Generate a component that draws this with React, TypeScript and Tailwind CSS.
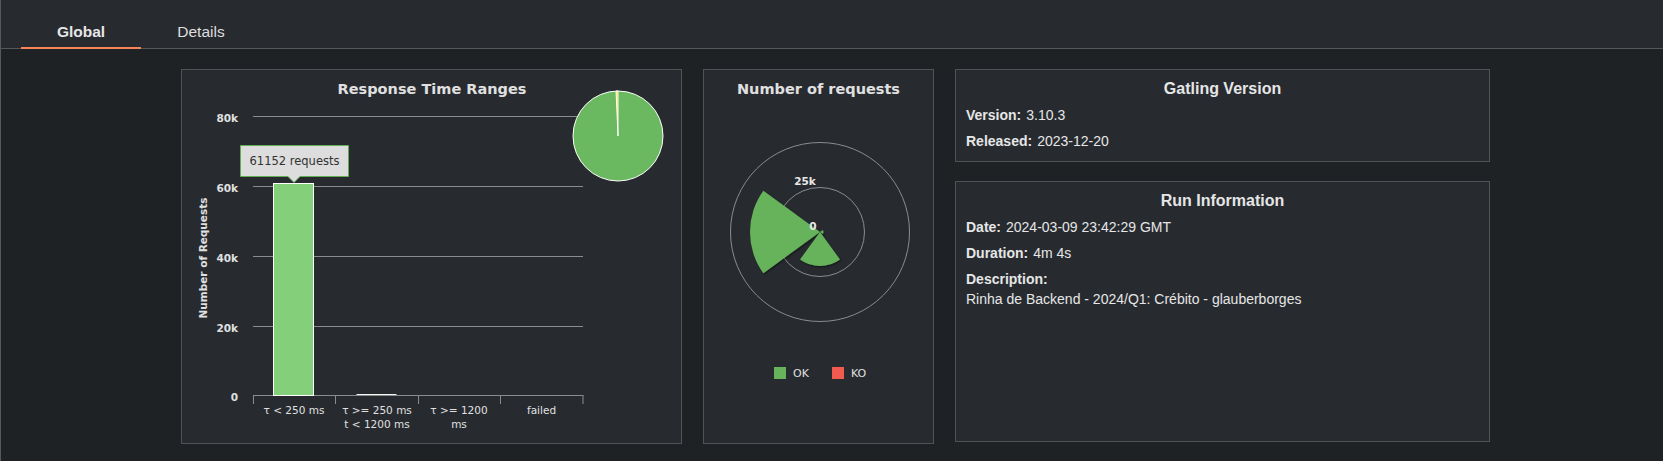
import React from "react";

const chartFont = "'DejaVu Sans', Verdana, sans-serif";

function wedge(cx: number, cy: number, r: number, a0: number, a1: number) {
  const rad = (d: number) => (d * Math.PI) / 180;
  const x0 = cx + r * Math.cos(rad(a0));
  const y0 = cy + r * Math.sin(rad(a0));
  const x1 = cx + r * Math.cos(rad(a1));
  const y1 = cy + r * Math.sin(rad(a1));
  const large = a1 - a0 > 180 ? 1 : 0;
  return `M ${cx} ${cy} L ${x0} ${y0} A ${r} ${r} 0 ${large} 1 ${x1} ${y1} Z`;
}

const gridY = [46.5, 116.5, 186.5, 256.5];
const yLabels = ["80k", "60k", "40k", "20k"];
const ticks = [71.5, 153.5, 236.5, 318.5, 401];

function ResponseTimeChart() {
  return (
    <svg width="499" height="373" style={{ fontFamily: chartFont }}>
      <text x="250" y="24" textAnchor="middle" fontSize="14.5" fontWeight="bold" fill="#e0e0e0">
        Response Time Ranges
      </text>

      {gridY.map((y, i) => (
        <g key={y}>
          <line x1="71" x2="401" y1={y} y2={y} stroke="#8a8c8e" strokeWidth="1" />
          <text x="56" y={y + 5} textAnchor="end" fontSize="10.5" fontWeight="bold" fill="#e0e0e0">
            {yLabels[i]}
          </text>
        </g>
      ))}
      <text x="56" y="331" textAnchor="end" fontSize="10.5" fontWeight="bold" fill="#e0e0e0">0</text>

      <line x1="71" x2="401.5" y1="325.5" y2="325.5" stroke="#8a8c8e" />
      {ticks.map((x) => (
        <line key={x} x1={x} x2={x} y1="325.5" y2="334" stroke="#8a8c8e" />
      ))}

      <text
        transform="translate(25 188) rotate(-90)"
        textAnchor="middle"
        fontSize="10.5"
        fontWeight="bold"
        fill="#e0e0e0"
      >
        Number of Requests
      </text>

      <rect x="91.5" y="113.5" width="40" height="212" fill="#84d07a" stroke="#ffffff" />
      <rect x="174.5" y="324" width="40" height="1" fill="#f4f4f0" />

      <g fontSize="10.5" fill="#e0e0e0" textAnchor="middle">
        <text x="112" y="344">τ &lt; 250 ms</text>
        <text x="195" y="344">τ &gt;= 250 ms</text>
        <text x="195" y="358">t &lt; 1200 ms</text>
        <text x="277" y="344">τ &gt;= 1200</text>
        <text x="277" y="358">ms</text>
        <text x="359.5" y="344">failed</text>
      </g>

      <g>
        <path
          d="M 58.5 75.5 H 166.5 V 106.5 H 118 L 112 112.5 L 106 106.5 H 58.5 Z"
          fill="#dcdddc"
          stroke="#62ad54"
          strokeWidth="1"
          strokeLinejoin="round"
        />
        <text x="112.5" y="95" textAnchor="middle" fontSize="11.5" fill="#333333">
          61152 requests
        </text>
      </g>

      <circle cx="436" cy="66" r="45" fill="#6ab85f" stroke="#ffffff" strokeWidth="1" />
      <path d={wedge(436, 66, 45, -92.5, -90)} fill="#ffdd00" stroke="#ffffff" strokeWidth="1" />
    </svg>
  );
}

function RequestsChart() {
  const cx = 116;
  const cy = 162;
  return (
    <svg width="229" height="373" style={{ fontFamily: chartFont }}>
      <defs>
        <filter id="sh" x="-20%" y="-20%" width="150%" height="150%">
          <feDropShadow dx="1" dy="1" stdDeviation="1.2" floodColor="#000000" floodOpacity="0.55" />
        </filter>
      </defs>
      <text x="114.5" y="24" textAnchor="middle" fontSize="14.5" fontWeight="bold" fill="#e0e0e0">
        Number of requests
      </text>

      <circle cx={cx} cy={cy} r="89.5" fill="none" stroke="#8a8c8e" />
      <circle cx={cx} cy={cy} r="44.5" fill="none" stroke="#8a8c8e" />

      <g filter="url(#sh)" fill="#66b35c">
        <path d={wedge(cx, cy, 70, 144, 216)} />
        <path d={wedge(cx, cy, 34, 54, 126)} />
        <path d={wedge(cx, cy, 3.5, -36, 36)} />
      </g>

      <text x="101" y="115" textAnchor="middle" fontSize="10.5" fontWeight="bold" fill="#e8e8e8">25k</text>
      <text x="109" y="160" textAnchor="middle" fontSize="10.5" fontWeight="bold" fill="#e8e8e8">0</text>

      <rect x="70" y="297" width="12" height="12" fill="#66b35c" />
      <text x="89" y="307" fontSize="11" fill="#e0e0e0">OK</text>
      <rect x="128" y="297" width="12" height="12" fill="#f15b4f" />
      <text x="147" y="307" fontSize="11" fill="#e0e0e0">KO</text>
    </svg>
  );
}

function Row({ label, value }: { label: string; value?: string }) {
  return (
    <p className="mt-[6px] leading-[20px] text-[14px] text-[#e6e6e6]">
      <span className="font-bold">{label}</span>
      {value && <span className="ml-[5px]">{value}</span>}
    </p>
  );
}

export default function App() {
  return (
    <div className="h-screen bg-[#1f2225] border-l border-[#56585a] font-['Liberation_Sans',Arial,sans-serif]">
      <header className="h-[49px] bg-[#272b30] border-b border-[#56585a] flex pl-[20px]">
        <div className="w-[120px] h-[49px] -mb-px border-b-2 border-[#f8855a] flex items-center justify-center pt-[16px] text-[15.5px] font-bold text-[#e6e6e6]">
          Global
        </div>
        <div className="w-[120px] h-[48px] flex items-center justify-center pt-[16px] text-[15.5px] text-[#dedede]">
          Details
        </div>
      </header>

      <main className="flex pt-[20px] pl-[180px] gap-[21px]">
        <section className="w-[501px] h-[375px] border border-[#505356] bg-[#272b30]">
          <ResponseTimeChart />
        </section>

        <section className="w-[231px] h-[375px] border border-[#505356] bg-[#272b30]">
          <RequestsChart />
        </section>

        <div className="w-[535px] flex flex-col gap-[19px]">
          <section className="border border-[#505356] bg-[#272b30] px-[10px] pt-[9px] pb-[10px]">
            <h3 className="text-center text-[16px] leading-[20px] font-bold text-[#e6e6e6]">Gatling Version</h3>
            <Row label="Version:" value="3.10.3" />
            <Row label="Released:" value="2023-12-20" />
          </section>

          <section className="h-[261px] border border-[#505356] bg-[#272b30] px-[10px] pt-[9px]">
            <h3 className="text-center text-[16px] leading-[20px] font-bold text-[#e6e6e6]">Run Information</h3>
            <Row label="Date:" value="2024-03-09 23:42:29 GMT" />
            <Row label="Duration:" value="4m 4s" />
            <Row label="Description:" />
            <p className="leading-[21px] text-[14px] text-[#e6e6e6]">
              Rinha de Backend - 2024/Q1: Crébito - glauberborges
            </p>
          </section>
        </div>
      </main>
    </div>
  );
}
